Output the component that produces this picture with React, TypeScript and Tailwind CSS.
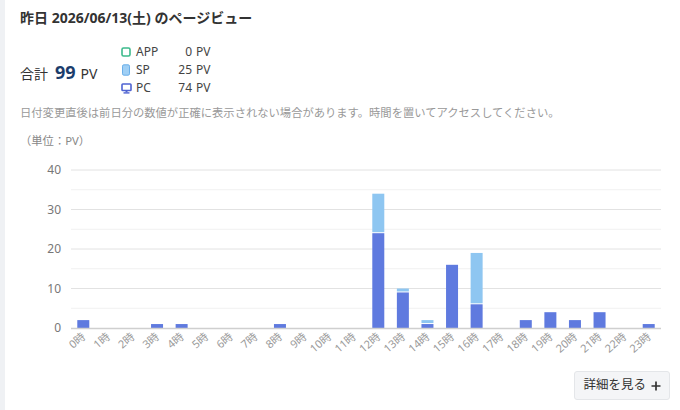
import React from "react";

type Hour = { pc: number; sp: number };

const hours: Hour[] = [
  { pc: 2, sp: 0 }, { pc: 0, sp: 0 }, { pc: 0, sp: 0 }, { pc: 1, sp: 0 },
  { pc: 1, sp: 0 }, { pc: 0, sp: 0 }, { pc: 0, sp: 0 }, { pc: 0, sp: 0 },
  { pc: 1, sp: 0 }, { pc: 0, sp: 0 }, { pc: 0, sp: 0 }, { pc: 0, sp: 0 },
  { pc: 24, sp: 10 }, { pc: 9, sp: 1 }, { pc: 1, sp: 1 }, { pc: 16, sp: 0 },
  { pc: 6, sp: 13 }, { pc: 0, sp: 0 }, { pc: 2, sp: 0 }, { pc: 4, sp: 0 },
  { pc: 2, sp: 0 }, { pc: 4, sp: 0 }, { pc: 0, sp: 0 }, { pc: 1, sp: 0 },
];

const FONT = '"Noto Sans", "Noto Sans CJK JP", sans-serif';

// chart geometry (svg coords)
const X0 = 51;
const X1 = 641;
const Y_TOP = 20;
const Y_BASE = 178;
const MAX = 40;
const slot = (X1 - X0) / 24;
const yOf = (v: number) => Y_BASE - (v / MAX) * (Y_BASE - Y_TOP);

const AppIcon = () => (
  <svg width="10" height="10" viewBox="0 0 10 10">
    <rect x="1" y="1" width="8" height="8" rx="1.5" fill="none" stroke="#3dba8c" strokeWidth="1.6" />
  </svg>
);

const SpIcon = () => (
  <svg width="10" height="12" viewBox="0 0 10 12">
    <rect x="1.5" y="0.8" width="7" height="10.4" rx="1.4" fill="#9fcff5" stroke="#6aaee8" strokeWidth="1" />
  </svg>
);

const PcIcon = () => (
  <svg width="11" height="11" viewBox="0 0 11 11">
    <rect x="1" y="1" width="9" height="6.5" rx="0.8" fill="none" stroke="#4f63d2" strokeWidth="1.6" />
    <rect x="4.5" y="7.5" width="2" height="1.8" fill="#4f63d2" />
    <rect x="2.5" y="9.2" width="6" height="1.4" fill="#4f63d2" />
  </svg>
);

const PlusIcon = () => (
  <svg width="10" height="10" viewBox="0 0 10 10">
    <path d="M5 0.5V9.5M0.5 5H9.5" stroke="#333" strokeWidth="1.7" />
  </svg>
);

const devices = [
  { label: "APP", value: 0, icon: <AppIcon /> },
  { label: "SP", value: 25, icon: <SpIcon /> },
  { label: "PC", value: 74, icon: <PcIcon /> },
];

const Chart: React.FC = () => (
  <svg width="660" height="212" className="block overflow-visible" style={{ fontFamily: FONT }}>
    {[5, 15, 25, 35].map((v) => (
      <line key={v} x1={X0} x2={X1} y1={yOf(v)} y2={yOf(v)} stroke="#f1f1f1" strokeWidth="1" />
    ))}
    {[10, 20, 30, 40].map((v) => (
      <line key={v} x1={X0} x2={X1} y1={yOf(v)} y2={yOf(v)} stroke="#e2e2e2" strokeWidth="1" />
    ))}
    {[0, 10, 20, 30, 40].map((v) => (
      <text key={v} x={41} y={yOf(v) + 4} textAnchor="end" fontSize="12" fill="#777">
        {v}
      </text>
    ))}
    {hours.map((h, i) => {
      const cx = X0 + slot * i + slot / 2;
      const x = cx - 6;
      const pcTop = yOf(h.pc);
      const spTop = yOf(h.pc + h.sp);
      const lx = cx + 3;
      const ly = Y_BASE + 10;
      return (
        <g key={i}>
          {h.pc > 0 && (
            <rect x={x} y={pcTop} width="12" height={Y_BASE - pcTop} fill="#5f7adf" />
          )}
          {h.sp > 0 && (
            <rect x={x} y={spTop} width="12" height={pcTop - spTop - 1} fill="#8ec6f1" />
          )}
          <text
            x={lx}
            y={ly}
            textAnchor="end"
            fontSize="11"
            fill="#9a9a9a"
            transform={`rotate(-40 ${lx} ${ly})`}
          >
            {i}時
          </text>
        </g>
      );
    })}
    <line x1={X0} x2={X1} y1={Y_BASE + 0.5} y2={Y_BASE + 0.5} stroke="#cfcfcf" strokeWidth="1.5" />
  </svg>
);

const App: React.FC = () => {
  return (
    <div className="flex h-[410px] w-[680px] bg-[#eff1f4]" style={{ fontFamily: FONT }}>
      <div className="w-[5px] shrink-0" />
      <div className="flex-1 bg-white pl-[15px] pt-[8px]">
        <h2 className="text-[14px] font-bold leading-5 text-[#333]">
          昨日 2026/06/13(土) のページビュー
        </h2>

        <div className="mt-[15px] flex items-center">
          <div className="flex w-[101px] items-baseline pt-1 text-[#333]">
            <span className="text-[14px]">合計</span>
            <span className="ml-[7px] text-[18px] font-bold text-[#1c3d6c]">99</span>
            <span className="ml-[5px] text-[14px]">PV</span>
          </div>
          <div className="flex flex-col">
            {devices.map((d) => (
              <div key={d.label} className="flex h-[18px] items-center text-[12px] text-[#444]">
                <span className="flex w-[15px] items-center">{d.icon}</span>
                <span className="w-[30px]">{d.label}</span>
                <span className="w-[26px] text-right">{d.value}</span>
                <span className="ml-[4px]">PV</span>
              </div>
            ))}
          </div>
        </div>

        <p className="mt-[7px] text-[11.3px] leading-[18px] text-[#999]">
          日付変更直後は前日分の数値が正確に表示されない場合があります。時間を置いてアクセスしてください。
        </p>
        <p className="mt-[10px] text-[11.3px] leading-[18px] text-[#888]">（単位：PV）</p>

        <Chart />

        <div className="mt-[9px] flex justify-end pr-[10px]">
          <button className="flex h-[29px] items-center gap-[5px] rounded-[3px] border border-[#e4e6e9] bg-[#f4f5f7] px-[8px] text-[12.5px] text-[#333]">
            詳細を見る
            <PlusIcon />
          </button>
        </div>
      </div>
    </div>
  );
};

export default App;
